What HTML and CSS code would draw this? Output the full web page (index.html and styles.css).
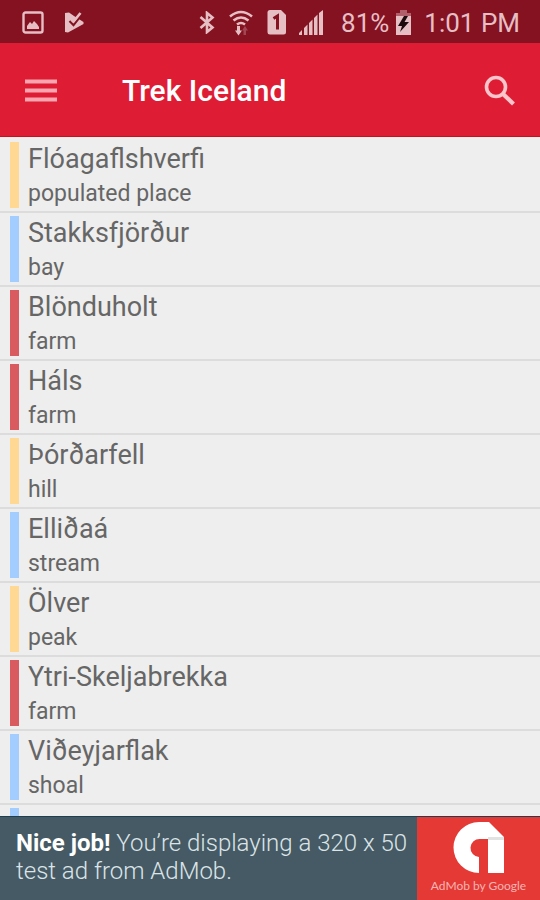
FILE: index.html
```html
<!DOCTYPE html>
<html lang="en">
<head>
    <meta charset="UTF-8">
    <meta name="viewport" content="width=device-width, initial-scale=1.0">
    <title>Trek Iceland</title>
    <link rel="stylesheet" href="styles.css">
</head>
<body>
    <div class="status-bar">
        <div class="status-left">
            <svg width="22" height="23" viewBox="0 0 22 23">
                <rect x="1.5" y="1.5" width="19" height="20" rx="2" fill="none" stroke="currentColor" stroke-width="2.4"/>
                <path d="M5 18v-3l3-4 2 2 2-3 3 3 2 3v2z" fill="currentColor"/>
            </svg>
            <svg width="20" height="23" viewBox="0 0 20 23">
                <path d="M1 2l4-.5 5 3.500L19.500 11v2L4 21.500l-3-.5z" fill="currentColor"/>
                <path d="M5.500 10l4 4L17 4.500" fill="none" stroke="#851221" stroke-width="2.200"/>
                <path d="M7.500 8.500l2 2L16.500 2" fill="none" stroke="currentColor" stroke-width="2.600"/>
            </svg>
        </div>
        <div class="status-right">
            <svg class="bluetooth" width="16" height="23" viewBox="0 0 16 23">
                <path d="M1.500 6l12 10.500L8 21V2l5.500 4.500L1.500 17" fill="none" stroke="currentColor" stroke-width="2.600"/>
            </svg>
            <svg class="wifi" width="24" height="26" viewBox="0 0 24 26">
                <g fill="none" stroke="currentColor" stroke-width="2.600">
                    <path d="M1 6.500q11-9 22 0"/>
                    <path d="M4.500 10.500q7.500-6 15 0"/>
                    <path d="M8 14.500q4-3 8 0"/>
                </g>
                <path d="M8 16h3v4.500h2L9.500 25.500 6 20.500h2z" fill="currentColor"/>
                <path d="M14.500 25v-4.500h-1.500l3-4.500 3 4.500h-2V25z" fill="currentColor" opacity=".3"/>
            </svg>
            <svg class="sim" width="20" height="25" viewBox="0 0 20 25">
                <path d="M3 0h11l5 5v17q0 2.500-2.500 2.500H3Q.5 24.500.5 22V2.500Q.5 0 3 0z" fill="currentColor"/>
                <path d="M6.500 8.500L10.500 6v13.500" fill="none" stroke="#851221" stroke-width="3"/>
            </svg>
            <svg class="signal" width="24" height="25" viewBox="0 0 24 25">
                <path d="M0 25v-2l3-3v5zM5 25v-7l3.500-3.500V25zM10 25V13l3.500-3.500V25zM15 25V8l3.500-3.500V25zM20 25V3l4-3v25z" fill="currentColor"/>
            </svg>
            <span>81%</span>
            <svg class="battery" width="17" height="25" viewBox="0 0 17 25">
                <path d="M1 6V3h4V0h7v3h4v3z" fill="currentColor" opacity=".45"/>
                <path d="M1 6h15v19H1z" fill="currentColor"/>
                <path d="M9 6L3 16h4l-2 6 9-10H9.500L13 6z" fill="#1d0a0d"/>
            </svg>
            <span>1:01 PM</span>
        </div>
    </div>

    <header class="toolbar">
        <button type="button" class="icon-button" aria-label="Menu">
            <svg width="32" height="32" viewBox="0 0 32 32">
                <path d="M0 6.500h32M0 15.500h32M0 24.500h32" stroke="currentColor" stroke-width="4"/>
            </svg>
        </button>
        <h1>Trek Iceland</h1>
        <button type="button" class="icon-button search" aria-label="Search">
            <svg width="32" height="32" viewBox="0 0 32 32">
                <circle cx="12" cy="12" r="9.500" fill="none" stroke="currentColor" stroke-width="3.600"/>
                <path d="M18.500 18.500L29.500 29" stroke="currentColor" stroke-width="4.200"/>
            </svg>
        </button>
    </header>

    <ul class="places">
        <li class="place orange">
            <h2>Flóagaflshverfi</h2>
            <p>populated place</p>
        </li>
        <li class="place blue">
            <h2>Stakksfjörður</h2>
            <p>bay</p>
        </li>
        <li class="place red">
            <h2>Blönduholt</h2>
            <p>farm</p>
        </li>
        <li class="place red">
            <h2>Háls</h2>
            <p>farm</p>
        </li>
        <li class="place orange">
            <h2>Þórðarfell</h2>
            <p>hill</p>
        </li>
        <li class="place blue">
            <h2>Elliðaá</h2>
            <p>stream</p>
        </li>
        <li class="place orange">
            <h2>Ölver</h2>
            <p>peak</p>
        </li>
        <li class="place red">
            <h2>Ytri-Skeljabrekka</h2>
            <p>farm</p>
        </li>
        <li class="place blue">
            <h2>Viðeyjarflak</h2>
            <p>shoal</p>
        </li>
        <li class="place blue"></li>
    </ul>

    <footer class="ad">
        <p class="ad-text"><strong>Nice job!</strong> You’re displaying a 320 x 50 test ad from AdMob.</p>
        <div class="ad-brand">
            <svg width="52" height="52" viewBox="0 0 52 52">
                <path d="M26 51A25.500 25.500 0 0 1 26 0h10L51 15v36H35V17H27a9 9 0 0 0-1 18z" fill="#fff"/>
                <path d="M35 15h16v3H35z" fill="#e2e2e2"/>
            </svg>
            <span>AdMob by Google</span>
        </div>
    </footer>
</body>
</html>
```

FILE: styles.css
```css
* {
    box-sizing: border-box;
}
body {
    margin: 0;
    height: 100vh;
    display: flex;
    flex-direction: column;
    font-family: Roboto, sans-serif;
    background-color: #eeeeee;
}
h1, h2, p, ul {
    margin: 0;
    padding: 0;
    font-weight: normal;
}
svg {
    display: block;
    flex: none;
}

/* status bar */
.status-bar {
    flex: none;
    height: 43px;
    padding: 2px 20px 0 22px;
    display: flex;
    align-items: center;
    justify-content: space-between;
    background-color: #851221;
    color: #e6bfc5;
    font-size: 26px;
    white-space: nowrap;
}
.status-left, .status-right {
    display: flex;
    align-items: center;
}
.status-left {
    gap: 20px;
}
.bluetooth, .wifi {
    margin-right: 14px;
}
.sim {
    margin-right: 12px;
}
.signal {
    margin-right: 18px;
}
.battery {
    margin: 0 12px 0 6px;
}

/* toolbar */
.toolbar {
    flex: none;
    height: 94px;
    padding: 2px 24px 0 25px;
    display: flex;
    align-items: center;
    background-color: #de1d35;
    border-bottom: 1px solid #c8101f;
}
.toolbar h1 {
    flex: 1;
    margin-left: 65px;
    font-size: 30px;
    font-weight: 500;
    color: #fff;
}
.icon-button {
    padding: 0;
    border: none;
    background: none;
    color: #f9a6b0;
    cursor: pointer;
}
.search {
    color: #fbc5cb;
}

/* list of places */
.places {
    flex: 1;
    min-height: 0;
    padding-top: 2px;
    overflow: hidden;
    list-style: none;
}
.place {
    height: 74px;
    padding: 3px 10px;
    border-bottom: 2px solid #dcdcdc;
    color: #666;
}
.place::before {
    content: "";
    float: left;
    width: 9px;
    height: 66px;
    margin-right: 9px;
    background-color: #a3ccff;
}
.orange::before {
    background-color: #ffd993;
}
.red::before {
    background-color: #d95b5f;
}
.place h2 {
    font-size: 27px;
    line-height: 34px;
}
.place p {
    font-size: 23px;
    line-height: 35px;
}

/* ad banner */
.ad {
    flex: none;
    height: 84px;
    display: flex;
    background-color: #455a64;
    border-top: 1px solid #1d3f50;
}
.ad-text {
    flex: 1;
    padding: 12px 0 0 16px;
    font-size: 24px;
    font-weight: 300;
    line-height: 28px;
    color: #dce4e8;
}
.ad-text strong {
    font-weight: 700;
    color: #fff;
}
.ad-brand {
    width: 123px;
    padding-top: 5px;
    display: flex;
    flex-direction: column;
    align-items: center;
    gap: 2px;
    background-color: #e53935;
    color: #f7b5b3;
    font-family: Lato, sans-serif;
    font-size: 12px;
    line-height: 20px;
}
```
